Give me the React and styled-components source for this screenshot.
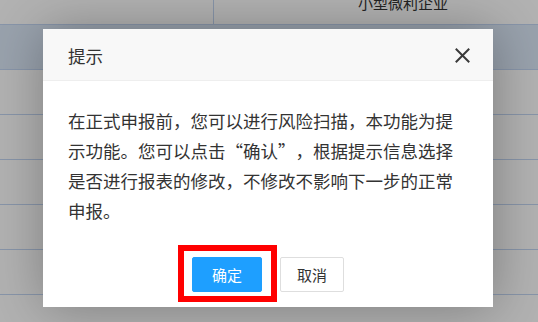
import React from "react";
import styled, { createGlobalStyle } from "styled-components";

const Global = createGlobalStyle`
  html, body { margin: 0; padding: 0; }
  body {
    width: 538px;
    height: 322px;
    overflow: hidden;
    background: #fff;
    font-family: "Noto Sans CJK SC", "Noto Sans", sans-serif;
    color: #333;
  }
`;

const Page = styled.div`
  position: relative;
  width: 538px;
  height: 322px;
  overflow: hidden;
  background: #fff;
`;

const Table = styled.div`
  display: flex;
  flex-direction: column;
  margin-top: -20px;
  width: 592px;
`;

const Row = styled.div`
  display: grid;
  grid-template-columns: 214px 378px;
  height: 45px;
  box-sizing: border-box;
  border-bottom: 1px solid #c3d6f2;
  background: ${(p) => (p.$active ? "#dbe9f8" : "#fff")};
`;

const Cell = styled.div`
  display: flex;
  align-items: center;
  justify-content: center;
  font-size: 15px;
  color: #333;
  border-right: ${(p) => (p.$divider ? "1px solid #c3d6f2" : "none")};
`;

const Shade = styled.div`
  position: absolute;
  inset: 0;
  background: rgba(0, 0, 0, 0.3);
  display: flex;
  align-items: flex-start;
  justify-content: flex-start;
  padding: 29px 0 0 43px;
`;

const Dialog = styled.div`
  width: 450px;
  background: #fff;
  box-shadow: 1px 1px 50px rgba(0, 0, 0, 0.3);
  display: flex;
  flex-direction: column;
`;

const Header = styled.div`
  height: 52px;
  box-sizing: border-box;
  background: #f8f8f8;
  border-bottom: 1px solid #eee;
  display: flex;
  align-items: center;
  justify-content: space-between;
  padding: 2px 23px 0 25px;
`;

const Title = styled.span`
  font-size: 17.5px;
  color: #333;
`;

const Close = styled.button`
  width: 16px;
  height: 16px;
  padding: 0;
  border: none;
  background: transparent;
  display: flex;
  align-items: center;
  justify-content: center;
  cursor: pointer;
`;

const Content = styled.div`
  padding: 25px 25px 25px 25px;
  font-size: 17.5px;
  line-height: 30px;
  color: #333;
  word-break: break-all;
`;

const Quote = styled.span`
  display: inline-block;
  width: 1em;
  text-align: ${(p) => (p.$open ? "right" : "left")};
`;

const Buttons = styled.div`
  display: flex;
  justify-content: center;
  gap: 18px;
  padding: 6px 0 15px;
`;

const Btn = styled.button`
  position: relative;
  box-sizing: border-box;
  height: 35px;
  width: ${(p) => p.$w}px;
  padding: 0;
  border-radius: 2px;
  font-family: inherit;
  font-size: 15px;
  cursor: pointer;
  border: 1px solid ${(p) => (p.$primary ? "#1e9fff" : "#dedede")};
  background: ${(p) => (p.$primary ? "#1e9fff" : "#fff")};
  color: ${(p) => (p.$primary ? "#fff" : "#333")};
`;

const Highlight = styled.span`
  position: absolute;
  top: -13px;
  left: -15px;
  right: -16px;
  bottom: -11px;
  border: 6px solid #ff0000;
  pointer-events: none;
`;

export default function App() {
  return (
    <>
      <Global />
      <Page>
        <Table>
          <Row>
            <Cell $divider />
            <Cell>小型微利企业</Cell>
          </Row>
          <Row $active>
            <Cell />
            <Cell />
          </Row>
          <Row><Cell /><Cell /></Row>
          <Row><Cell /><Cell /></Row>
          <Row><Cell /><Cell /></Row>
          <Row><Cell /><Cell /></Row>
          <Row><Cell /><Cell /></Row>
          <Row><Cell /><Cell /></Row>
        </Table>
        <Shade>
          <Dialog>
            <Header>
              <Title>提示</Title>
              <Close aria-label="关闭">
                <svg width="15" height="15" viewBox="0 0 15 15">
                  <path d="M1.5 1.5 L13.5 13.5 M13.5 1.5 L1.5 13.5" stroke="#3a3a3a" strokeWidth="2" strokeLinecap="square" />
                </svg>
              </Close>
            </Header>
            <Content>
              在正式申报前，您可以进行风险扫描，本功能为提示功能。您可以点击<Quote $open>“</Quote>确认<Quote>”</Quote>，根据提示信息选择是否进行报表的修改，不修改不影响下一步的正常申报。
            </Content>
            <Buttons>
              <Btn $primary $w={70}>
                确定
                <Highlight />
              </Btn>
              <Btn $w={64}>取消</Btn>
            </Buttons>
          </Dialog>
        </Shade>
      </Page>
    </>
  );
}
